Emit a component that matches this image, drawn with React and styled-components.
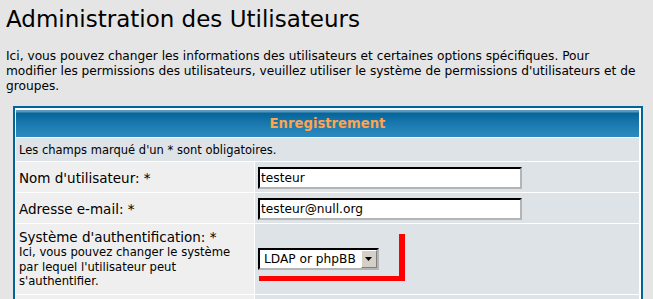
import React from "react";
import styled, { createGlobalStyle } from "styled-components";

const Global = createGlobalStyle`
  html, body { margin: 0; padding: 0; background: #e5e5e5; }
  body { font-family: "DejaVu Sans", Verdana, sans-serif; color: #000; }
`;

const Page = styled.div`
  padding: 5px 12px 0 6px;
`;

const Title = styled.h1`
  margin: 0;
  font-size: 23px;
  font-weight: normal;
  line-height: 28px;
  color: #000;
`;

const Intro = styled.p`
  margin: 16px 0 0 0;
  font-size: 12.2px;
  line-height: 15px;
  color: #000;
`;

const Forumline = styled.div`
  margin: 12px 0 0 7px;
  width: 630px;
  box-sizing: border-box;
  border: 2px solid #006699;
  background: #fff;
  padding: 2px 2px 1px 1px;
  display: grid;
  grid-template-columns: 238px 1fr;
  gap: 1px;
`;

const Head = styled.div`
  grid-column: 1 / -1;
  height: 27px;
  background: linear-gradient(
    to bottom,
    #5b97ba 0,
    #5b97ba 2px,
    #04659b 3px,
    #1a78ae 50%,
    #2b8bc1 100%
  );
  color: #ffa34f;
  font-weight: bold;
  font-size: 13.2px;
  display: flex;
  align-items: center;
  justify-content: center;
`;

const Note = styled.div`
  grid-column: 1 / -1;
  background: #dee3e7;
  height: 23px;
  box-sizing: border-box;
  padding: 0 3px;
  font-size: 11.5px;
  display: flex;
  align-items: center;
`;

const Cell = styled.div`
  background: ${(p) => (p.$alt ? "#dee3e7" : "#efefef")};
  min-height: ${(p) => p.$h || 30}px;
  box-sizing: border-box;
  padding: ${(p) => (p.$pt === undefined ? 2 : p.$pt)}px 3px 0 3px;
  display: flex;
  flex-direction: column;
  justify-content: ${(p) => (p.$top ? "flex-start" : "center")};
  position: relative;
`;

const Label = styled.span`
  font-size: 13.5px;
  line-height: 16px;
`;

const Explain = styled.span`
  font-size: 11.6px;
  line-height: 14.5px;
`;

const TextInput = styled.input`
  width: 264px;
  height: 22px;
  box-sizing: border-box;
  border-style: solid;
  border-width: 2px;
  border-color: #000 #b4b4b4 #b4b4b4 #000;
  background: #fff;
  font-family: "DejaVu Sans", Verdana, sans-serif;
  font-size: 12.2px;
  padding: 0 1px;
  margin: 0;
  color: #000;
  outline: none;
`;

const SelectBox = styled.div`
  width: 121px;
  height: 22px;
  box-sizing: border-box;
  border-style: solid;
  border-width: 2px;
  border-color: #000 #b4b4b4 #b4b4b4 #000;
  background: #fff;
  display: flex;
  align-items: center;
  font-size: 12.2px;
`;

const SelectText = styled.span`
  flex: 1;
  padding-left: 4px;
  white-space: nowrap;
`;

const SelectButton = styled.span`
  width: 16px;
  height: 18px;
  box-sizing: border-box;
  background: #d4d0c8;
  border-style: solid;
  border-width: 1px;
  border-color: #fff #808080 #808080 #fff;
  display: flex;
  align-items: center;
  justify-content: center;
`;

const Marker = styled.div`
  position: absolute;
  left: ${(p) => p.$x}px;
  top: ${(p) => p.$y}px;
  width: ${(p) => p.$w}px;
  height: ${(p) => p.$h}px;
  background: #ff0000;
`;

export default function App() {
  return (
    <>
      <Global />
      <Page>
        <Title>Administration des Utilisateurs</Title>
        <Intro>
          Ici, vous pouvez changer les informations des utilisateurs et certaines options spécifiques. Pour
          modifier les permissions des utilisateurs, veuillez utiliser le système de permissions d'utilisateurs et de
          groupes.
        </Intro>
        <Forumline>
          <Head>Enregistrement</Head>
          <Note>Les champs marqué d'un * sont obligatoires.</Note>

          <Cell>
            <Label>Nom d'utilisateur: *</Label>
          </Cell>
          <Cell $alt>
            <TextInput defaultValue="testeur" readOnly />
          </Cell>

          <Cell>
            <Label>Adresse e-mail: *</Label>
          </Cell>
          <Cell $alt>
            <TextInput defaultValue="testeur@null.org" readOnly />
          </Cell>

          <Cell $h={70} $pt={5} $top>
            <Label>Système d'authentification: *</Label>
            <Explain>
              Ici, vous pouvez changer le système
              <br />
              par lequel l'utilisateur peut
              <br />
              s'authentifier.
            </Explain>
          </Cell>
          <Cell $alt $h={70} $pt={0}>
            <SelectBox>
              <SelectText>LDAP or phpBB</SelectText>
              <SelectButton>
                <svg width="8" height="5" viewBox="0 0 8 5">
                  <path d="M0 0 H7 L3.5 4 Z" fill="#000" />
                </svg>
              </SelectButton>
            </SelectBox>
            <Marker $x={144} $y={10} $w={6} $h={47} />
            <Marker $x={4} $y={52} $w={146} $h={5} />
          </Cell>

          <Cell $h={30} />
          <Cell $alt $h={30} />
        </Forumline>
      </Page>
    </>
  );
}
